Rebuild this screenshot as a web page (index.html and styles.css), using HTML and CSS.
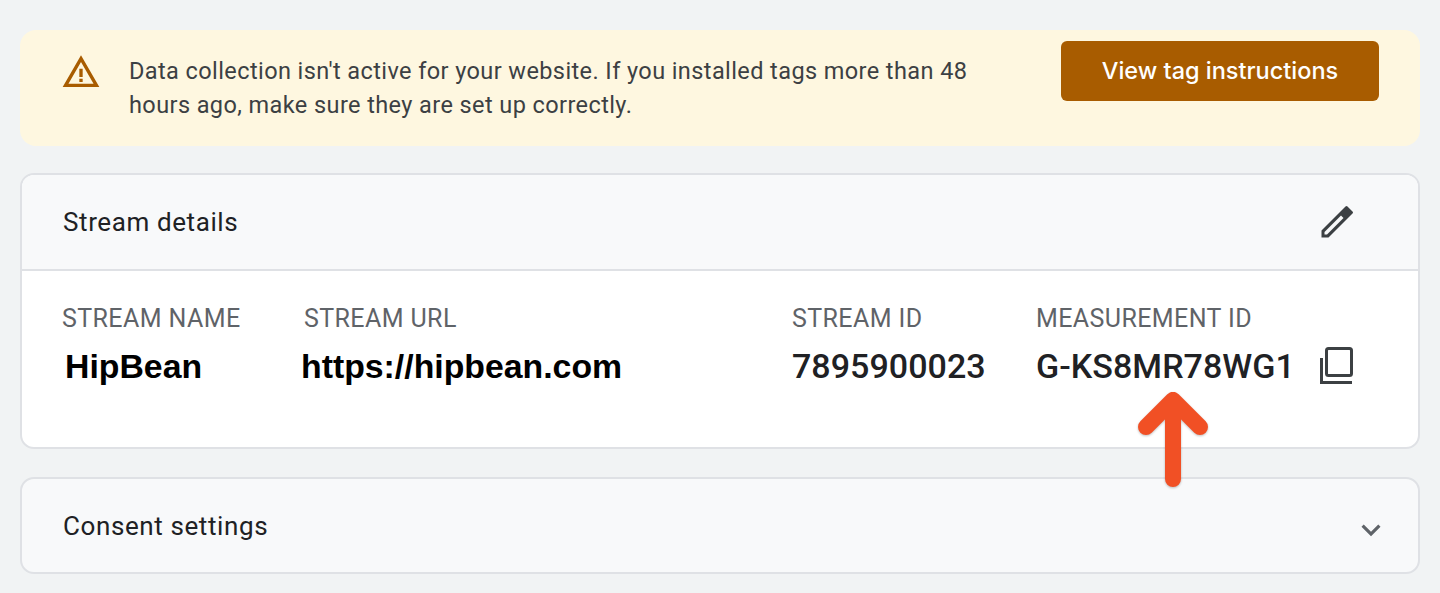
FILE: index.html
```html
<!DOCTYPE html>
<html lang="en">
<head>
  <meta charset="UTF-8" />
  <meta name="viewport" content="width=device-width, initial-scale=1.0"/>
  <title>Stream details</title>
  <link rel="stylesheet" href="styles.css">
</head>
<body>

  <div class="banner">
    <svg class="warnIcon" viewBox="0 0 24 24" width="40" height="40">
      <path d="M12 5.99 19.53 19H4.47L12 5.99M12 2 1 21h22L12 2zm1 14h-2v2h2v-2zm0-6h-2v5h2v-5z"/>
    </svg>
    <p class="bannerText">Data collection isn't active for your website. If you installed tags more than 48 hours ago, make sure they are set up correctly.</p>
    <a class="bannerBtn">View tag instructions</a>
  </div>

  <section class="card details">
    <header class="cardHead">
      <h2>Stream details</h2>
      <svg class="editIcon" viewBox="0 0 32 32" width="32" height="32">
        <path fill-rule="evenodd" d="M0.5 31.5V24.5L24.5 0.5Q25.5 -0.5 26.5 0.5L31.5 5.5Q32.5 6.5 31.5 7.5L7.5 31.5ZM3.5 26 20 9.5 22.5 12 6 28.5H3.5Z"/>
      </svg>
    </header>
    <div class="cardBody">
      <div class="field">
        <span class="label">STREAM NAME</span>
        <span class="bold nameVal">HipBean</span>
      </div>
      <div class="field">
        <span class="label">STREAM URL</span>
        <span class="bold urlVal">https://hipbean.com</span>
      </div>
      <div class="field">
        <span class="label">STREAM ID</span>
        <span class="value">7895900023</span>
      </div>
      <div class="field">
        <span class="label">MEASUREMENT ID</span>
        <span class="value">G-KS8MR78WG1</span>
      </div>
      <svg class="copyIcon" viewBox="0 0 33 37" width="33" height="37">
        <rect x="6.5" y="1.5" width="25" height="27" rx="2"/>
        <path d="M1.5 11V35.5H32"/>
      </svg>
    </div>
    <svg class="arrow" viewBox="0 0 72 100" width="72" height="100">
      <path d="M36 92V13M9 40 36 13l27 27"/>
    </svg>
  </section>

  <section class="card consent">
    <h2>Consent settings</h2>
    <svg class="chevron" viewBox="0 0 24 24" width="38" height="38">
      <path d="M7.41 8.59 12 13.17l4.59-4.58L18 10l-6 6-6-6z"/>
    </svg>
  </section>

</body>
</html>
```

FILE: styles.css
```css
body {
  font-family: Roboto, Arial, sans-serif;
  background-color: #f1f3f4;
  margin: 0;
  padding: 30px 20px 0;
  height: 593px;
  box-sizing: border-box;
  overflow: hidden;
  color: #202124;
}

.banner {
  display: flex;
  align-items: flex-start;
  height: 116px;
  box-sizing: border-box;
  padding: 11px 41px 0 41px;
  background-color: #fef7e0;
  border-radius: 16px;
}

.warnIcon {
  fill: #a85c00;
  flex: none;
  margin-top: 11px;
}

.bannerText {
  flex: none;
  width: 860px;
  margin: 13px 0 0 28px;
  font-size: 23.5px;
  line-height: 34px;
  letter-spacing: 0.41px;
  color: #3c4043;
}

.bannerBtn {
  margin-left: auto;
  width: 318px;
  height: 60px;
  box-sizing: border-box;
  padding-bottom: 2px;
  display: flex;
  align-items: center;
  justify-content: center;
  background-color: #a85c00;
  border-radius: 6px;
  color: #fff;
  font-family: Inter, Roboto, sans-serif;
  font-size: 23.5px;
  font-weight: 500;
}

.card {
  border: 2px solid #dfe1e5;
  border-radius: 14px;
  box-sizing: border-box;
  background-color: #f8f9fa;
}

.card h2 {
  margin: 0;
  font-size: 26px;
  font-weight: 400;
  letter-spacing: 0.6px;
}

.details {
  position: relative;
  height: 276px;
  margin-top: 27px;
  background-color: #fff;
}

.cardHead {
  display: flex;
  align-items: center;
  justify-content: space-between;
  height: 94px;
  padding: 0 65px 0 41px;
  background-color: #f8f9fa;
  border-bottom: 2px solid #dfe1e5;
  border-radius: 12px 12px 0 0;
}

.editIcon {
  fill: #3c4043;
  flex: none;
}

.cardBody {
  display: grid;
  grid-template-columns: 242px 488px 244px 284px 33px;
  padding: 32px 0 0 40px;
}

.field {
  display: flex;
  flex-direction: column;
}

.label {
  font-size: 25px;
  line-height: 32px;
  letter-spacing: 0.4px;
  color: #5f6368;
}

.value {
  margin-top: 11px;
  font-size: 34px;
  line-height: 40px;
  font-weight: 500;
  letter-spacing: 0.05px;
}

.bold {
  margin-top: 11px;
  font-family: "Liberation Sans", Arial, sans-serif;
  font-size: 33.8px;
  line-height: 40px;
  font-weight: 700;
  color: #000;
}

.nameVal {
  margin-left: 3px;
}

.urlVal {
  margin-left: -3px;
}

.copyIcon {
  margin-top: 44px;
  fill: none;
  stroke: #3c4043;
  stroke-width: 3;
}

.arrow {
  position: absolute;
  left: 1115px;
  top: 212px;
  fill: none;
  stroke: #f15025;
  stroke-width: 16;
  stroke-linecap: round;
  stroke-linejoin: round;
  filter: drop-shadow(0 1px 1px rgba(0, 0, 0, 0.25));
}

.consent {
  display: flex;
  align-items: center;
  justify-content: space-between;
  height: 97px;
  margin-top: 28px;
  padding: 0 28px 0 41px;
}

.chevron {
  fill: #5f6368;
  flex: none;
  margin-top: 8px;
}
```
